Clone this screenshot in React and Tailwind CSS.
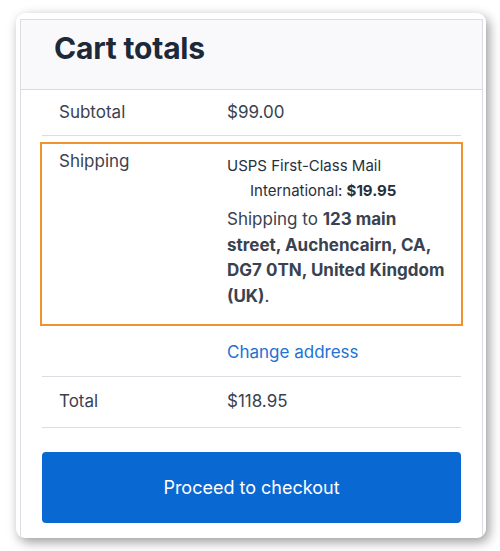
import React from 'react';

const CartTotals = () => {
  return (
    <div className="w-[500px] h-[551px] bg-white pt-[13px] pl-[16px]" style={{ fontFamily: 'Inter, "Noto Sans", sans-serif' }}>
      {/* Card with window-like shadow */}
      <div className="w-[470px] h-[525px] bg-white rounded-[9px] shadow-[3px_4px_12px_rgba(0,0,0,0.4)] pt-[6px] pl-[4px] pr-[3px] overflow-hidden">
        <div className="h-full border-x border-t border-[#dcdde3] flex flex-col">
          {/* Header */}
          <div className="h-[70px] bg-[#f9f9fb] border-b border-[#d8dae2] pl-[33px] pt-[9px]">
            <h2 className="text-[30px] leading-[38px] font-bold text-[#1d2939] tracking-[-0.2px]">Cart totals</h2>
          </div>

          {/* Rows */}
          <div className="mx-[21px] flex flex-col text-[17px] text-[#3a4250]">
            <div className="flex h-[46px] items-center border-b border-[#dcdde3]">
              <div className="w-[185px] pl-[17px] pt-[1px]">Subtotal</div>
              <div className="pt-[1px]">$99.00</div>
            </div>

            {/* Shipping (highlighted) */}
            <div className="mt-[6px] -mx-[2px] border-2 border-[#f0932e] h-[184px] flex pt-[4px]">
              <div className="w-[185px] pl-[17px] leading-[24px] pt-[1px]">Shipping</div>
              <div className="flex-1">
                <div className="text-[15px] leading-[25px] pt-[5px] text-[#27303d]">USPS First-Class Mail</div>
                <div className="text-[15px] leading-[25px] pl-[23px] text-[#27303d]">
                  International: <span className="font-bold">$19.95</span>
                </div>
                <div className="leading-[25.7px] pt-[4px]">
                  Shipping to <span className="font-bold">123 main</span>
                  <br />
                  <span className="font-bold">street, Auchencairn, CA,</span>
                  <br />
                  <span className="font-bold">DG7 0TN, United Kingdom</span>
                  <br />
                  <span className="font-bold">(UK)</span>.
                </div>
              </div>
            </div>

            <div className="flex h-[51px] items-center border-b border-[#dcdde3]">
              <div className="w-[185px]"></div>
              <a href="#" className="text-[#2271d4] pt-[4px]">Change address</a>
            </div>

            <div className="flex h-[51px] items-center border-b border-[#dcdde3]">
              <div className="w-[185px] pl-[17px]">Total</div>
              <div>$118.95</div>
            </div>

            <button className="mt-[24px] h-[71px] w-full rounded-[4px] bg-[#0a68d3] text-white text-[18px] flex items-center justify-center">
              Proceed to checkout
            </button>
          </div>
        </div>
      </div>
    </div>
  );
};

export default function App() {
  return <CartTotals />;
}
